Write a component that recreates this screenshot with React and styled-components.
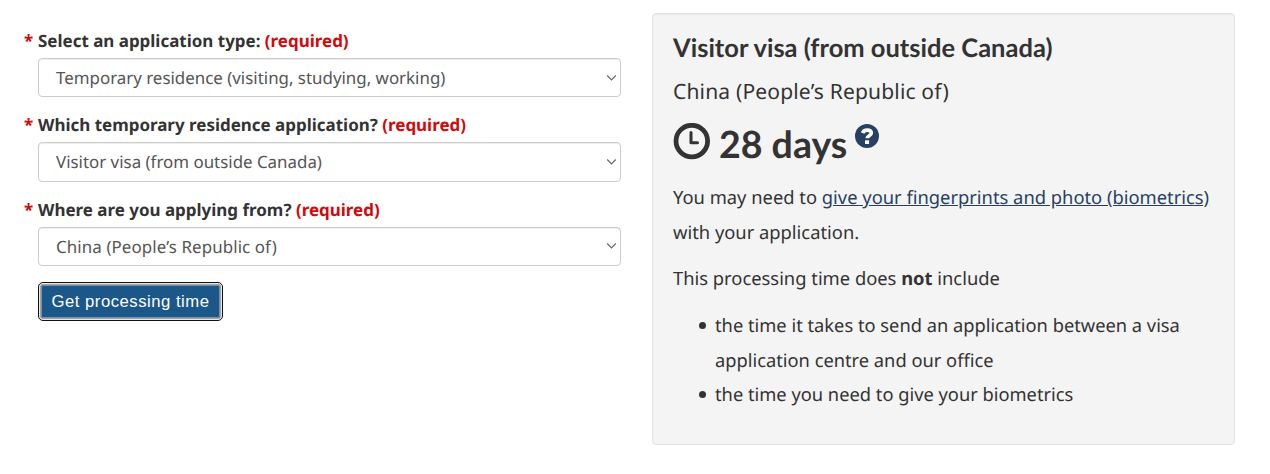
import React, { useState } from "react";
import styled, { createGlobalStyle } from "styled-components";

const GlobalStyle = createGlobalStyle`
  *, *::before, *::after {
    box-sizing: border-box;
  }
  body {
    margin: 0;
    background: #fff;
    color: #333;
    font-family: "Noto Sans", sans-serif;
    text-rendering: geometricPrecision;
  }
`;

const Page = styled.main`
  display: grid;
  grid-template-columns: 597px 583px;
  column-gap: 31px;
  align-items: start;
  height: 474px;
  padding: 13px 0 0 24px;
  overflow: hidden;
`;

const Form = styled.form`
  display: flex;
  flex-direction: column;
  padding: 15px 0 0 14px;
`;

const Field = styled.div`
  display: flex;
  flex-direction: column;
  height: 84.4px;
`;

const Label = styled.label`
  height: 30px;
  margin-left: -14px;
  font-size: 16.97px;
  font-weight: 700;
  line-height: 26px;
  white-space: nowrap;
`;

const Required = styled.span`
  color: #d3080c;
`;

const Star = styled(Required)`
  display: inline-block;
  width: 14px;
`;

const SelectBox = styled.div`
  display: grid;
  height: 39.2px;
  align-items: center;

  > * {
    grid-area: 1 / 1;
  }
  svg {
    justify-self: end;
    margin-right: 4px;
    pointer-events: none;
  }
`;

const Select = styled.select`
  width: 100%;
  height: 100%;
  padding: 0 17px;
  appearance: none;
  border: 1px solid #ccc;
  border-radius: 4px;
  background: #fff;
  color: #555;
  font-family: inherit;
  font-size: 16.9px;
  letter-spacing: ${(props) => props.$spacing || "normal"};
  text-rendering: inherit;
  box-shadow: inset 0 1px 1px rgba(0, 0, 0, 0.075);
`;

const Button = styled.button`
  align-self: flex-start;
  width: 181px;
  height: 35px;
  margin: 3px 0 0 2px;
  padding: 0;
  border: 1px solid #a3a3a3;
  border-radius: 3px;
  outline: 1px solid #101010;
  outline-offset: 1px;
  background: #1c578a;
  color: #fff;
  font-family: "Liberation Sans", sans-serif;
  font-size: 16.7px;
  letter-spacing: 0.5px;
  line-height: 32px;
  white-space: nowrap;
  box-shadow: inset 0 0 0 1px #7690a6, 0 0 0 1px #e8e8e8;
`;

const Well = styled.section`
  height: 432px;
  padding: 18px 20px;
  border: 1px solid #e3e3e3;
  border-radius: 4px;
  background: #f4f4f4;
  box-shadow: inset 0 1px 1px rgba(0, 0, 0, 0.05);
`;

const Title = styled.h2`
  margin: 0;
  font-family: Lato, sans-serif;
  font-size: 25.5px;
  font-weight: 700;
  line-height: 32px;
  white-space: nowrap;
`;

const Country = styled.p`
  margin: 11px 0 0;
  font-size: 21.05px;
  line-height: 34px;
  letter-spacing: 0.15px;
  white-space: nowrap;
`;

const Result = styled.div`
  display: flex;
  align-items: flex-start;
  height: 44px;
  margin-top: 13px;
`;

const Days = styled.strong`
  margin: 0 7.5px 0 9px;
  font-family: Lato, sans-serif;
  font-size: 37.5px;
  font-weight: 700;
  line-height: 43px;
  white-space: nowrap;
`;

const Text = styled.p`
  margin: ${(props) => props.$top || 0}px 0 0;
  font-size: 18.35px;
  line-height: 34.7px;
`;

const Link = styled.a`
  color: #284162;
  white-space: nowrap;
  text-decoration: underline;
`;

const List = styled.ul`
  margin: 12px 0 0;
  padding-left: 42px;
  font-size: 18.29px;
  line-height: 34.6px;
  list-style: none;
`;

const Item = styled.li`
  &::before {
    content: "";
    display: inline-block;
    width: 7px;
    height: 7px;
    margin: 0 9px 3px -16px;
    border-radius: 50%;
    background: currentColor;
  }
`;

const Chevron = () => (
  <svg width="11" height="8" viewBox="0 0 11 8" fill="none">
    <path d="M1.2 1.5 5.5 5.8 9.8 1.5" stroke="#666" strokeWidth="1.2" />
  </svg>
);

const ClockIcon = styled.svg`
  margin-top: 1px;
`;

const Clock = () => (
  <ClockIcon width="37" height="37" viewBox="0 0 37 37" fill="none" stroke="#333">
    <circle cx="18.8" cy="18.1" r="15.8" strokeWidth="4.8" />
    <path d="M18 9.5v10.3h6.5" strokeWidth="3" strokeLinecap="round" strokeLinejoin="round" />
  </ClockIcon>
);

const HelpIcon = styled.svg`
  margin-top: 2px;
`;

const Help = () => (
  <HelpIcon width="24" height="24" viewBox="0 0 24 24">
    <circle cx="12" cy="12" r="12" fill="#284162" />
    <path d="M7.6 9C8.4 7 9.9 6.1 12 6.1c2.5 0 4.3 1.1 4.3 3 0 2.6-4.1 2.6-4.1 5.1" fill="none" stroke="#fff" strokeWidth="3.7" />
    <path d="M10 16.3h4.1v3.7h-4.1z" fill="#fff" />
  </HelpIcon>
);

const fields = [
  {
    id: "type",
    label: "Select an application type:",
    option: "Temporary residence (visiting, studying, working)",
  },
  {
    id: "application",
    label: "Which temporary residence application?",
    option: "Visitor visa (from outside Canada)",
  },
  {
    id: "country",
    label: "Where are you applying from?",
    option: "China (People’s Republic of)",
    spacing: "0.1px",
  },
];

const App = () => {
  const [shown, setShown] = useState(true);

  const handleSubmit = (e) => {
    e.preventDefault();
    setShown(true);
  };

  return (
    <Page>
      <GlobalStyle />
      <Form onSubmit={handleSubmit}>
        {fields.map(({ id, label, option, spacing }) => (
          <Field key={id}>
            <Label htmlFor={id}>
              <Star>*</Star>
              {label} <Required>(required)</Required>
            </Label>
            <SelectBox>
              <Select id={id} $spacing={spacing}>
                <option>{option}</option>
              </Select>
              <Chevron />
            </SelectBox>
          </Field>
        ))}
        <Button type="submit">Get processing time</Button>
      </Form>

      {shown && (
        <Well>
          <Title>Visitor visa (from outside Canada)</Title>
          <Country>China (People’s Republic of)</Country>
          <Result>
            <Clock />
            <Days>28 days</Days>
            <Help />
          </Result>
          <Text $top={15}>
            You may need to{" "}
            <Link href="#biometrics">give your fingerprints and photo (biometrics)</Link>{" "}
            with your application.
          </Text>
          <Text $top={12}>
            This processing time does <strong>not</strong> include
          </Text>
          <List>
            <Item>the time it takes to send an application between a visa application centre and our office</Item>
            <Item>the time you need to give your biometrics</Item>
          </List>
        </Well>
      )}
    </Page>
  );
};

export default App;
